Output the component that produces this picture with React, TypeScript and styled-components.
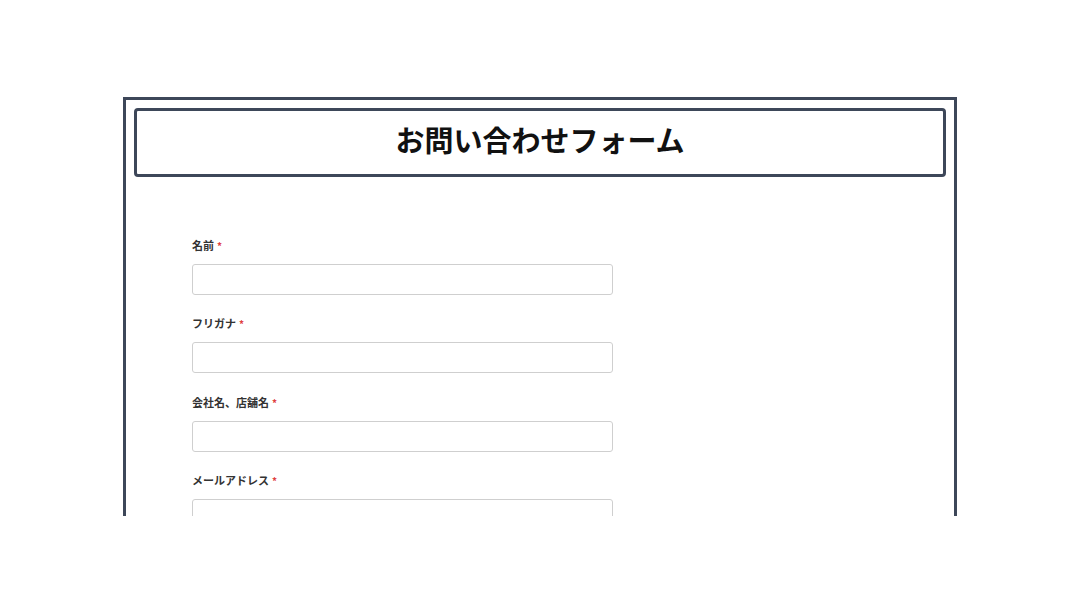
import React from 'react'
import styled, { createGlobalStyle } from 'styled-components'

const GlobalStyle = createGlobalStyle`
    html, body {
        margin: 0;
        padding: 0;
        background: #ffffff;
        font-family: 'Noto Sans CJK JP', 'Noto Sans', sans-serif;
    }
`

const Viewport = styled.div`
    height: 516px;
    overflow: hidden;
    padding-top: 97px;
    box-sizing: border-box;
`

const Frame = styled.div`
    width: 834px;
    margin: 0 auto;
    border: 3px solid #3d4759;
    box-sizing: border-box;
    padding: 8px 8px 40px;
    min-height: 600px;
`

const Header = styled.div`
    height: 69px;
    box-sizing: border-box;
    border: 3px solid #3d4759;
    border-radius: 4px;
    padding-bottom: 7px;
    display: flex;
    align-items: center;
    justify-content: center;
`

const Title = styled.h1`
    margin: 0;
    font-size: 29px;
    line-height: 36px;
    font-weight: 700;
    color: #111111;
`

const Form = styled.form`
    display: flex;
    flex-direction: column;
    gap: 20.3px;
    padding: 60px 0 0 58px;
`

const Field = styled.div`
    display: flex;
    flex-direction: column;
    gap: 10px;
`

const Label = styled.label`
    font-size: 11px;
    line-height: 16px;
    font-weight: 700;
    color: #333333;
`

const Required = styled.span`
    color: #e0403f;
    margin-left: 3px;
    font-size: 10px;
`

const Input = styled.input`
    width: 421px;
    height: 31px;
    box-sizing: border-box;
    border: 1px solid #cfcfcf;
    border-radius: 3px;
    background: #ffffff;
    padding: 0 8px;
    font-size: 13px;
    font-family: inherit;
    outline: none;
`

const fields = ['名前', 'フリガナ', '会社名、店舗名', 'メールアドレス']

const App = () => {
    return (
        <>
            <GlobalStyle />
            <Viewport>
                <Frame>
                    <Header>
                        <Title>お問い合わせフォーム</Title>
                    </Header>
                    <Form>
                        {fields.map((name) => (
                            <Field key={name}>
                                <Label>
                                    {name}
                                    <Required>*</Required>
                                </Label>
                                <Input type="text" />
                            </Field>
                        ))}
                    </Form>
                </Frame>
            </Viewport>
        </>
    )
}

export default App
